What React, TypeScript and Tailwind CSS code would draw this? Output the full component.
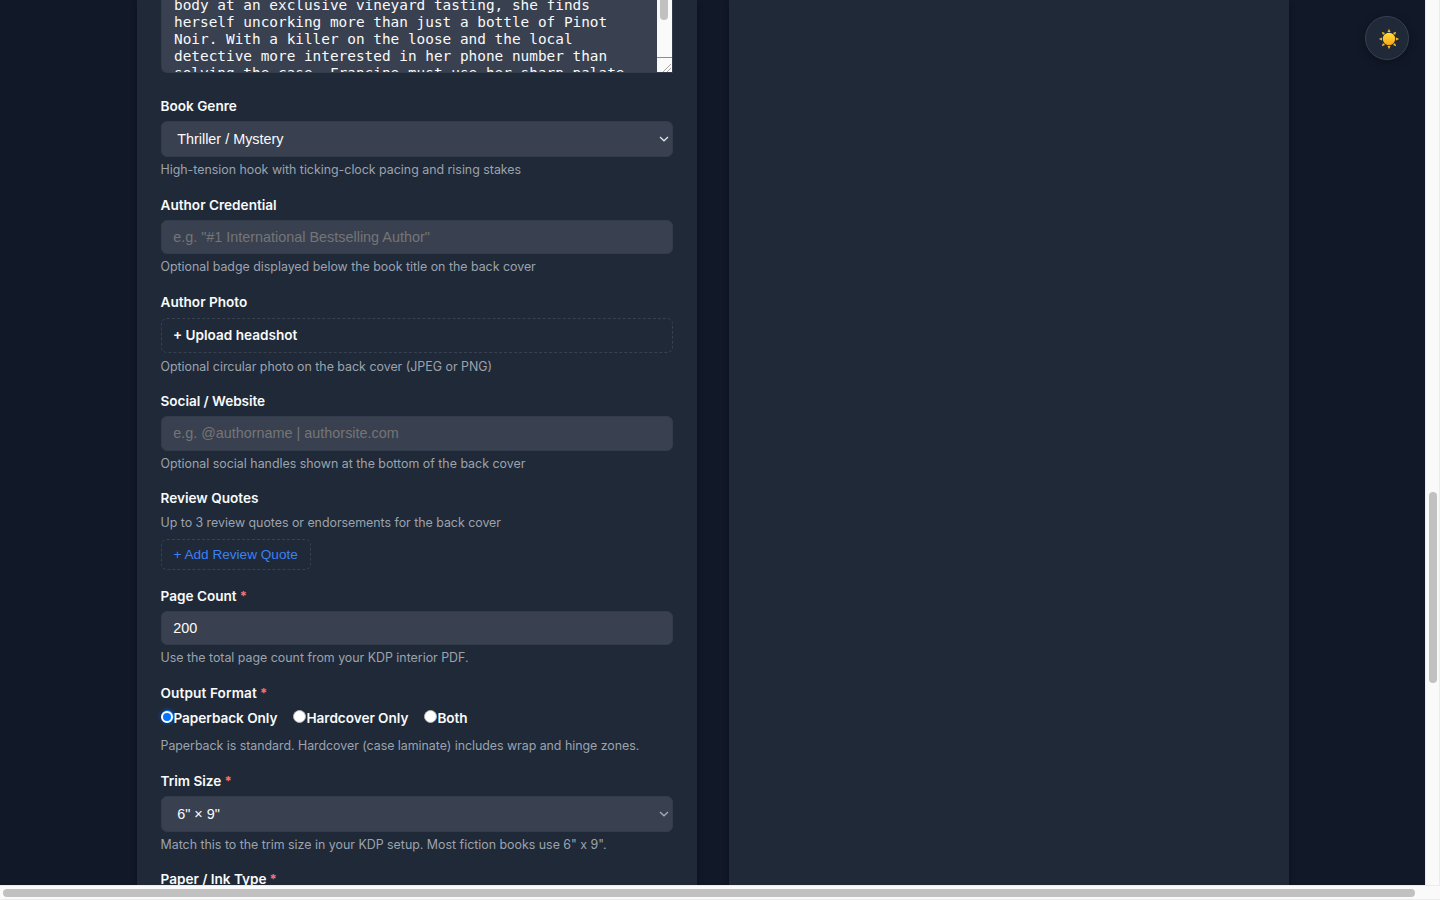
import type { ReactNode } from "react";
import clsx from "clsx";

const synopsis = [
	"body at an exclusive vineyard tasting, she finds",
	"herself uncorking more than just a bottle of Pinot",
	"Noir. With a killer on the loose and the local",
	"detective more interested in her phone number than",
	"solving the case, Francine must use her sharp palate",
];

const formats = ["Paperback Only", "Hardcover Only", "Both"];

export default function App() {
	return (
		<div className="flex h-[900px] w-[1440px] flex-col overflow-hidden bg-[#fafafa] font-['Inter',sans-serif]">
			<div className="flex h-[885px]">
				<main className="relative flex w-[1425px] gap-8 overflow-hidden bg-[#111827] pl-[136.5px]">
					<section className="w-[560px] shrink-0 bg-[#1f2937] px-6 shadow-[0_4px_6px_rgba(0,0,0,0.3)]">
						<BookForm />
					</section>
					<section className="w-[560px] shrink-0 bg-[#1f2937] shadow-[0_4px_6px_rgba(0,0,0,0.3)]" />
					<button className="absolute top-4 left-[1365px] flex size-11 items-center justify-center rounded-full border border-[#374151] bg-[#1f2937] pt-px pl-[3px] shadow-[0_2px_8px_rgba(0,0,0,0.3)]">
						<Sun />
					</button>
				</main>
				{/* Vertical scrollbar */}
				<div className="w-[15px] border-x border-[#ececec] bg-[#fafafa] pt-[492px] pl-[3px]">
					<div className="h-[191px] w-2 rounded-full bg-[#c1c1c1]" />
				</div>
			</div>
			{/* Horizontal scrollbar */}
			<div className="h-[15px] border-y border-[#ececec] bg-[#fafafa] pt-[3px] pl-[3px]">
				<div className="h-2 w-[1412px] rounded-full bg-[#c1c1c1]" />
			</div>
		</div>
	);
}

function BookForm() {
	return (
		<form>
			{/* Synopsis */}
			<div className="flex h-[73px] justify-between overflow-hidden rounded-bl-[6px] border border-t-0 border-[#323c4b] bg-[#394150] pl-[12.5px]">
				<div className="-mt-[3px] font-['DejaVu_Sans_Mono',monospace] text-[14.4px] leading-[17px] whitespace-pre text-[#f9fafb]">
					{synopsis.map((line) => (
						<div key={line}>{line}</div>
					))}
				</div>
				<div className="flex w-[15px] shrink-0 flex-col bg-[#fafafa]">
					<div className="ml-[3px] h-5 w-2 rounded-b-full bg-[#c1c1c1]" />
					<div className="mt-[37px] h-[15px] border-t border-[#8b8b8b]">
						<svg width="15" height="14" viewBox="0 0 15 14" fill="none" stroke="#a3a3a3">
							<path d="M6 14L14 6M10 14L14 10" />
						</svg>
					</div>
				</div>
			</div>

			<Label className="mt-[23px]">Book Genre</Label>
			<Select className="mt-[5px]">Thriller / Mystery</Select>
			<Hint className="mt-[3px] tracking-[-0.01px]">
				High-tension hook with ticking-clock pacing and rising stakes
			</Hint>

			<Label className="mt-[15px]">Author Credential</Label>
			<Input className="mt-[4.5px] text-[#757575]">
				e.g. "#1 International Bestselling Author"
			</Input>
			<Hint className="mt-[3px] tracking-[-0.01px]">
				Optional badge displayed below the book title on the back cover
			</Hint>

			<Label className="mt-[15px]">Author Photo</Label>
			<div className="mt-[5.5px] flex h-[35px] items-center rounded-[6px] border border-dashed border-[#374151] pl-[11.5px] text-[13.6px] font-semibold text-[#f9fafb]">
				+ Upload headshot
			</div>
			<Hint className="mt-[4.5px]">
				Optional circular photo on the back cover (JPEG or PNG)
			</Hint>

			<Label className="mt-[14px] tracking-[-0.05px]">
				Social / Website
			</Label>
			<Input className="mt-[5px] text-[#757575]">
				e.g. @authorname | authorsite.com
			</Input>
			<Hint className="mt-[3px]">
				Optional social handles shown at the bottom of the back cover
			</Hint>

			<Label className="mt-[14.5px]">Review Quotes</Label>
			<Hint className="mt-[5px] tracking-[-0.02px]">
				Up to 3 review quotes or endorsements for the back cover
			</Hint>
			<button
				type="button"
				className="mt-[5.5px] flex h-[31px] w-[150px] items-center rounded-[6px] border border-dashed border-[#374151] pt-0.5 pl-3 font-['Liberation_Sans',sans-serif] text-[13.6px] whitespace-nowrap text-[#3b82f6]"
			>
				+ Add Review Quote
			</button>

			<Label required className="mt-[16.5px]">
				Page Count
			</Label>
			<Input className="mt-[4.5px] text-[#f9fafb]">200</Input>
			<Hint className="mt-[3px] tracking-[-0.01px]">
				Use the total page count from your KDP interior PDF.
			</Hint>

			<Label required className="mt-[15px] tracking-[0.12px]">
				Output Format
			</Label>
			<div className="mt-[5px] flex h-5 gap-4">
				{formats.map((format, i) => (
					<Radio key={format} label={format} checked={i === 0} />
				))}
			</div>
			<Hint className="mt-[8px] tracking-[-0.03px]">
				Paperback is standard. Hardcover (case laminate) includes wrap and
				hinge zones.
			</Hint>

			<Label required className="mt-[15px]">
				Trim Size
			</Label>
			<Select className="mt-[4.5px]" muted>
				6" × 9"
			</Select>
			<Hint className="mt-[3.5px]">
				Match this to the trim size in your KDP setup. Most fiction books use
				6" x 9".
			</Hint>

			<Label required className="mt-[14px] tracking-[-0.02px]">
				Paper / Ink Type
			</Label>
		</form>
	);
}

type FieldProps = { children: ReactNode; className?: string };

function Label({
	children,
	className,
	required,
}: FieldProps & { required?: boolean }) {
	return (
		<div
			className={clsx(
				"h-5 text-[13.6px] leading-5 font-semibold whitespace-nowrap text-[#f9fafb]",
				className
			)}
		>
			{children}
			{required && (
				<span className="text-[13px] font-bold text-[#f87171]"> *</span>
			)}
		</div>
	);
}

function Hint({ children, className }: FieldProps) {
	return (
		<p
			className={clsx(
				"h-5 text-[12.4px] leading-5 whitespace-nowrap text-[#9ca3af]",
				className
			)}
		>
			{children}
		</p>
	);
}

function Input({ children, className }: FieldProps) {
	return (
		<div
			className={clsx(
				"flex h-[34.5px] items-center rounded-[6px] border border-[#323c4b] bg-[#394150] pt-0.5 pl-[11.7px] font-['Liberation_Sans',sans-serif] text-[14.4px]",
				className
			)}
		>
			{children}
		</div>
	);
}

function Select({
	children,
	className,
	muted,
}: FieldProps & { muted?: boolean }) {
	return (
		<div
			className={clsx(
				"flex h-9 items-center justify-between rounded-[6px] border border-[#323c4b] bg-[#394150] pr-[3px] pl-[15.7px] font-['Liberation_Sans',sans-serif] text-[14.4px] text-[#f9fafb]",
				className
			)}
		>
			<span className="pt-0.5">{children}</span>
			<svg
				width="10"
				height="6"
				viewBox="0 0 10 6"
				fill="none"
				stroke={muted ? "#a9afb9" : "#e5e7eb"}
				strokeWidth="1.2"
			>
				<path d="M1 1L5 4.8L9 1" />
			</svg>
		</div>
	);
}

function Radio({ label, checked }: { label: string; checked: boolean }) {
	return (
		<label className="flex text-[13.6px] leading-5 font-semibold tracking-[-0.04px] whitespace-nowrap text-[#f9fafb]">
			<span
				className={clsx(
					"mt-[2px] flex size-[13px] shrink-0 items-center justify-center rounded-full",
					checked
						? "bg-[#0075ff] shadow-[0_0_0_3px_#1d3050]"
						: "border border-[#b5b5b5] bg-white"
				)}
			>
				{checked && (
					<span className="size-[12px] rounded-full border-2 border-white" />
				)}
			</span>
			{label}
		</label>
	);
}

function Sun() {
	return (
		<svg width="22" height="22" viewBox="0 0 22 22">
			<defs>
				<linearGradient id="sun" x1="0" y1="0" x2="0" y2="1">
					<stop offset="0" stopColor="#ffe03a" />
					<stop offset="1" stopColor="#fba418" />
				</linearGradient>
			</defs>
			{[0, 45, 90, 135, 180, 225, 270, 315].map((deg) => (
				<path
					key={deg}
					d="M11 0.8L12.5 4H9.5Z"
					fill="#f7b52c"
					transform={`rotate(${deg} 11 11)`}
				/>
			))}
			<circle cx="11" cy="11" r="6.2" fill="url(#sun)" />
		</svg>
	);
}
